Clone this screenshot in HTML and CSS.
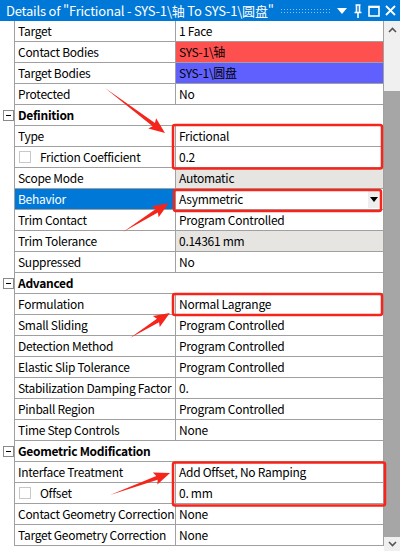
FILE: index.html
```html
<!DOCTYPE html>
<html lang="zh-CN">
<head>
    <meta charset="UTF-8">
    <title>Details</title>
    <link rel="stylesheet" href="styles.css">
</head>
<body>
    <div class="panel">
        <!-- タイトルバー -->
        <div class="titlebar">
            <span class="title-text">Details of "Frictional - SYS-1\轴 To SYS-1\圆盘"</span>
            <span class="grip"></span>
            <span class="tb-icon">
                <svg width="10" height="6" viewBox="0 0 10 6"><path d="M0 0H10L5 6Z" fill="#fff"/></svg>
            </span>
            <span class="tb-icon">
                <svg width="8" height="14" viewBox="0 0 8 14"><path d="M1.5 1H6.5M2.5 1V8M5.5 1V8M5.5 1V8M0.5 8.5H7.5M4 8.5V14" stroke="#fff" stroke-width="1.6" fill="none"/></svg>
            </span>
            <span class="tb-icon">
                <svg width="12" height="12" viewBox="0 0 12 12"><rect x="1" y="1.5" width="10" height="9.5" stroke="#fff" stroke-width="1.6" fill="none"/><path d="M1 2H11" stroke="#fff" stroke-width="2"/></svg>
            </span>
            <span class="tb-icon">
                <svg width="11" height="11" viewBox="0 0 11 11"><path d="M1 1L10 10M10 1L1 10" stroke="#fff" stroke-width="1.8"/></svg>
            </span>
        </div>

        <div class="content">
            <div class="sheet">
                <div class="row"><div class="gutter"></div><div class="label">Target</div><div class="value">1 Face</div></div>
                <div class="row"><div class="gutter"></div><div class="label">Contact Bodies</div><div class="value red">SYS-1\轴</div></div>
                <div class="row"><div class="gutter"></div><div class="label">Target Bodies</div><div class="value blue">SYS-1\圆盘</div></div>
                <div class="row"><div class="gutter"></div><div class="label">Protected</div><div class="value">No</div></div>

                <div class="row"><div class="gutter"><span class="collapse"></span></div><div class="group">Definition</div></div>
                <div class="row"><div class="gutter"></div><div class="label">Type</div><div class="value">Frictional</div></div>
                <div class="row"><div class="gutter"></div><div class="label"><span class="check"></span>Friction Coefficient</div><div class="value">0.2</div></div>
                <div class="row"><div class="gutter"></div><div class="label">Scope Mode</div><div class="value readonly">Automatic</div></div>
                <div class="row"><div class="gutter"></div><div class="label selected">Behavior</div><div class="value">Asymmetric<span class="dropdown"><svg width="8" height="5" viewBox="0 0 8 5"><path d="M0 0H8L4 5Z" fill="#000"/></svg></span></div></div>
                <div class="row"><div class="gutter"></div><div class="label">Trim Contact</div><div class="value">Program Controlled</div></div>
                <div class="row"><div class="gutter"></div><div class="label">Trim Tolerance</div><div class="value readonly">0.14361 mm</div></div>
                <div class="row"><div class="gutter"></div><div class="label">Suppressed</div><div class="value">No</div></div>

                <div class="row"><div class="gutter"><span class="collapse"></span></div><div class="group">Advanced</div></div>
                <div class="row"><div class="gutter"></div><div class="label">Formulation</div><div class="value">Normal Lagrange</div></div>
                <div class="row"><div class="gutter"></div><div class="label">Small Sliding</div><div class="value">Program Controlled</div></div>
                <div class="row"><div class="gutter"></div><div class="label">Detection Method</div><div class="value">Program Controlled</div></div>
                <div class="row"><div class="gutter"></div><div class="label">Elastic Slip Tolerance</div><div class="value">Program Controlled</div></div>
                <div class="row"><div class="gutter"></div><div class="label">Stabilization Damping Factor</div><div class="value">0.</div></div>
                <div class="row"><div class="gutter"></div><div class="label">Pinball Region</div><div class="value">Program Controlled</div></div>
                <div class="row"><div class="gutter"></div><div class="label">Time Step Controls</div><div class="value">None</div></div>

                <div class="row"><div class="gutter"><span class="collapse"></span></div><div class="group">Geometric Modification</div></div>
                <div class="row"><div class="gutter"></div><div class="label">Interface Treatment</div><div class="value">Add Offset, No Ramping</div></div>
                <div class="row"><div class="gutter"></div><div class="label"><span class="check"></span>Offset</div><div class="value">0. mm</div></div>
                <div class="row"><div class="gutter"></div><div class="label">Contact Geometry Correction</div><div class="value">None</div></div>
                <div class="row"><div class="gutter"></div><div class="label">Target Geometry Correction</div><div class="value">None</div></div>
            </div>

            <!-- スクロールバー -->
            <div class="scrollbar">
                <div class="sb-btn sb-up">
                    <svg width="9" height="6" viewBox="0 0 9 6"><path d="M1 5L4.5 1.5L8 5" stroke="#555" stroke-width="1.6" fill="none"/></svg>
                </div>
                <div class="sb-track"></div>
                <div class="sb-thumb"></div>
                <div class="sb-btn sb-down">
                    <svg width="9" height="6" viewBox="0 0 9 6"><path d="M1 1L4.5 4.5L8 1" stroke="#555" stroke-width="1.6" fill="none"/></svg>
                </div>
            </div>
        </div>

        <!-- 注記（赤枠・矢印） -->
        <svg class="marks" width="400" height="551" viewBox="0 0 400 551">
            <g fill="none" stroke="#f5251b" stroke-width="2.5">
                <rect x="173" y="125" width="209" height="43.5" rx="2"/>
                <rect x="174" y="190" width="207" height="21" rx="2"/>
                <rect x="173" y="294" width="209" height="21" rx="2"/>
                <rect x="173" y="462.5" width="212" height="43" rx="2"/>
            </g>
            <g fill="#f5251b">
                <polygon transform="translate(105 88) rotate(36.9)" points="0,0 61,-2 59,-6.5 75,0 59,6.5 61,2"/>
                <polygon transform="translate(123 232) rotate(-32.2)" points="0,0 40,-2 38,-6.5 54,0 38,6.5 40,2"/>
                <polygon transform="translate(130 338) rotate(-32)" points="0,0 33,-2 31,-6.5 47,0 31,6.5 33,2"/>
                <polygon transform="translate(110 495) rotate(-20.1)" points="0,0 50,-2 48,-6.5 64,0 48,6.5 50,2"/>
            </g>
        </svg>
    </div>
</body>
</html>
```

FILE: styles.css
```css
/* 全体 */
body {
    margin: 0;
    font-family: "Noto Sans CJK SC", "Noto Sans", sans-serif;
    font-size: 12px;
    letter-spacing: -0.28px;
    color: #000;
    background-color: #fff;
}

.panel {
    position: relative;
    width: 400px;
    height: 551px;
    overflow: hidden;
    background-color: #fff;
}

/* タイトルバー */
.titlebar {
    height: 21px;
    background-color: #0078d7;
    color: #fff;
    display: flex;
    align-items: center;
    padding-left: 6px;
    padding-right: 2px;
}

.title-text {
    font-size: 13px;
    letter-spacing: -0.2px;
    white-space: nowrap;
}

.grip {
    flex: 1;
    height: 6px;
    margin: 0 2px 0 6px;
    background-image: radial-gradient(circle, #8fc3ee 0.7px, transparent 0.9px);
    background-size: 3px 3px;
}

.tb-icon {
    width: 16px;
    display: flex;
    justify-content: center;
    align-items: center;
}

/* プロパティ表 */
.content {
    display: flex;
    height: 530px;
}

.sheet {
    width: 384px;
}

.row {
    display: flex;
    height: 21px;
}

.gutter {
    width: 14px;
    display: flex;
    align-items: center;
    justify-content: center;
}

.label,
.value,
.group {
    height: 20px;
    line-height: 20px;
    border-bottom: 1px solid #a0a0a0;
    border-right: 1px solid #a0a0a0;
    padding-left: 3px;
    white-space: nowrap;
    box-sizing: content-box;
}

.label {
    width: 157px;
    border-left: 1px solid #a0a0a0;
    display: flex;
    align-items: center;
}

.value {
    width: 204px;
    position: relative;
}

.group {
    width: 365px;
    border-left: 1px solid #a0a0a0;
    font-weight: bold;
}

.red {
    background-color: #ff5050;
}

.blue {
    background-color: #6060ff;
}

.readonly {
    background-color: #e6e5e2;
}

.selected {
    background-color: #0078d7;
    color: #fff;
}

.check {
    width: 10px;
    height: 10px;
    border: 1px solid #c8c8c8;
    margin: 0 9px 0 1px;
}

.collapse {
    width: 9px;
    height: 9px;
    border: 1px solid #8a8a8a;
    margin-left: 2px;
    position: relative;
}

.collapse::after {
    content: "";
    position: absolute;
    left: 2px;
    top: 4px;
    width: 5px;
    height: 1px;
    background-color: #000;
}

.dropdown {
    position: absolute;
    right: 3px;
    top: 1px;
    width: 12px;
    height: 18px;
    background-color: #eeeeee;
    display: flex;
    align-items: center;
    justify-content: center;
}

/* スクロールバー */
.scrollbar {
    width: 16px;
    display: flex;
    flex-direction: column;
    background-color: #f0f0f0;
}

.sb-btn {
    display: flex;
    justify-content: center;
    align-items: center;
}

.sb-up {
    height: 17px;
}

.sb-track {
    height: 53px;
}

.sb-thumb {
    height: 446px;
    background-color: #a6a6a6;
}

.sb-down {
    height: 14px;
}

/* 注記 */
.marks {
    position: absolute;
    left: 0;
    top: 0;
    pointer-events: none;
}
```
